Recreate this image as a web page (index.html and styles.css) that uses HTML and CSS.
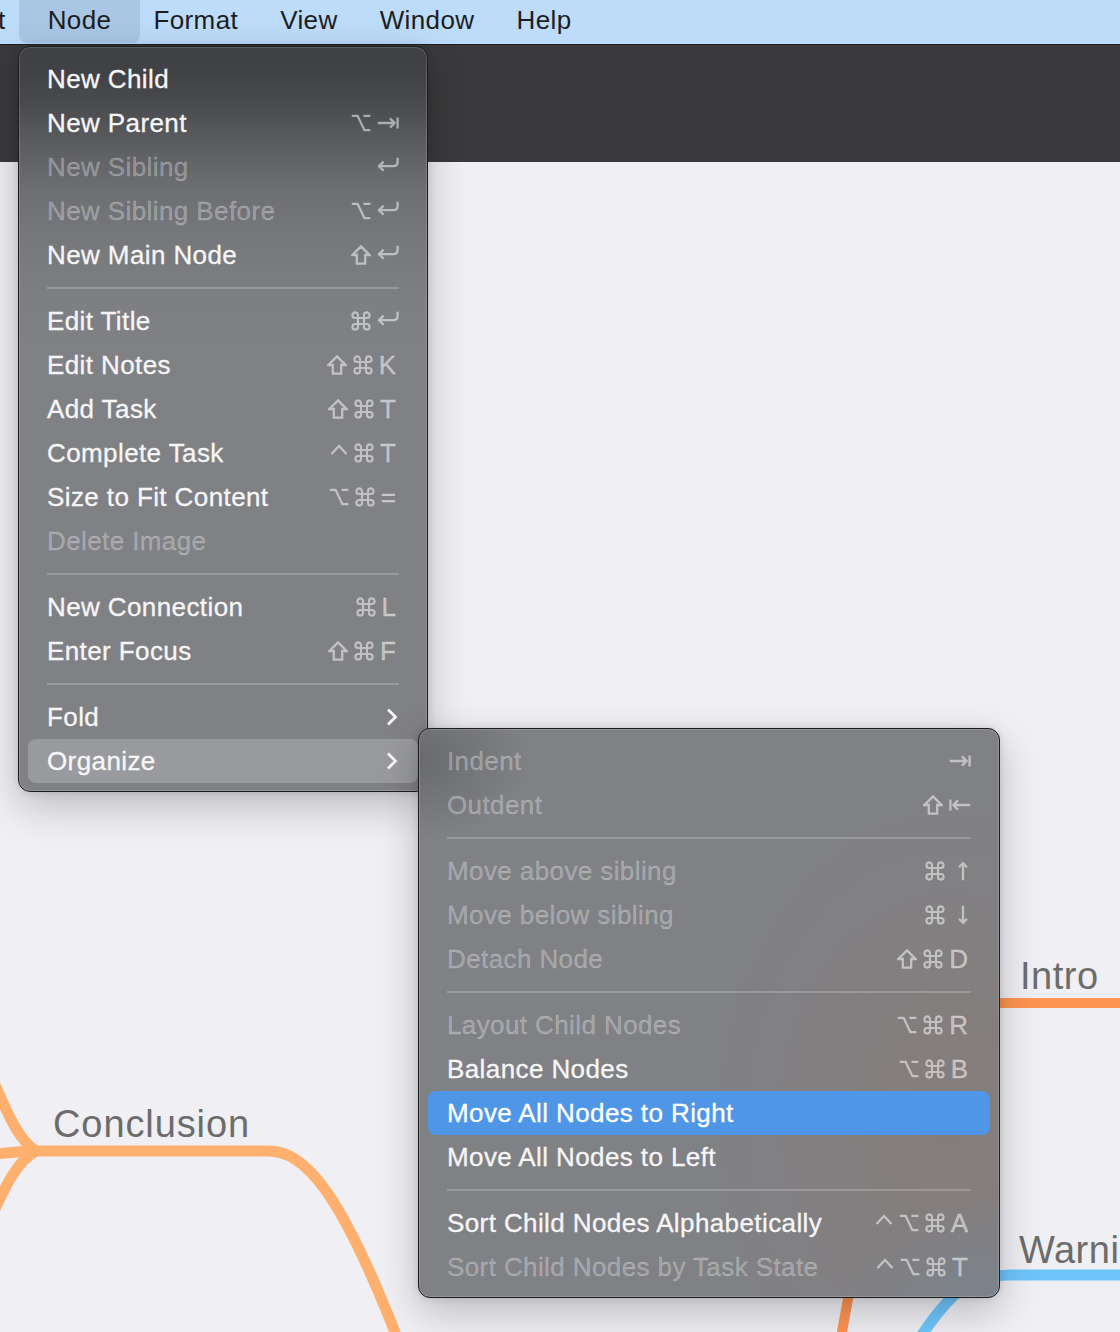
FILE: index.html
```html
<!DOCTYPE html>
<html lang="en">
<head>
<meta charset="utf-8">
<title>Node menu</title>
<link rel="stylesheet" href="styles.css">
</head>
<body>
<svg class="defs" width="0" height="0" aria-hidden="true">
  <symbol id="k-cmd" viewBox="0 0 20 20"><path d="M7 7V4.2A2.8 2.8 0 1 0 4.2 7H15.8A2.8 2.8 0 1 0 13 4.2V15.8A2.8 2.8 0 1 0 15.8 13H4.2A2.8 2.8 0 1 0 7 15.8Z"/></symbol>
  <symbol id="k-shift" viewBox="0 0 20 20"><path d="M10 1.4L18.6 10H14.2V18.6H5.8V10H1.4Z"/></symbol>
  <symbol id="k-opt" viewBox="0 0 20 20"><path d="M0.8 2.8H6.6L13.4 17.2H19.4M12.4 2.8H19.4"/></symbol>
  <symbol id="k-ret" viewBox="0 0 22 20"><path d="M20.6 0.8V5Q20.6 9.2 16.4 9.2H2M6.6 4.6L2 9.2L6.6 13.8"/></symbol>
  <symbol id="k-tab" viewBox="0 0 22 20"><path d="M0.8 10H17.6M13 5.4L17.6 10L13 14.6M20.6 4.4V15.6"/></symbol>
  <symbol id="k-btab" viewBox="0 0 22 20"><path d="M21.2 10H4.4M9 5.4L4.4 10L9 14.6M1.4 4.4V15.6"/></symbol>
  <symbol id="k-up" viewBox="0 0 20 20"><path d="M12 19.2V2.2M8 6.2L12 2.2L16 6.2"/></symbol>
  <symbol id="k-down" viewBox="0 0 20 20"><path d="M12 0.8V17.8M8 13.8L12 17.8L16 13.8"/></symbol>
  <symbol id="k-ctrl" viewBox="0 0 18 20"><path d="M1.5 11L9 3L16.5 11"/></symbol>
  <symbol id="k-chev" viewBox="0 0 14 20"><path d="M3 2.5L10.5 10L3 17.5"/></symbol>
</svg>

<div class="app">
  <nav class="menubar">
    <span class="mb-item cut">t</span>
    <span class="mb-item open">Node</span>
    <span class="mb-item">Format</span>
    <span class="mb-item">View</span>
    <span class="mb-item">Window</span>
    <span class="mb-item">Help</span>
  </nav>

  <div class="toolbar"></div>

  <main class="canvas">
    <svg class="map" width="1120" height="1170" viewBox="0 162 1120 1170">
      <g fill="none" stroke-linecap="round">
        <path d="M830 1400C868 1180 900 1003 1000 1003H1130" stroke="#fe9452" stroke-width="10"/>
        <path d="M915 1345C945 1300 965 1275 1010 1275H1130" stroke="#6ec5fb" stroke-width="11"/>
        <g stroke="#ffb06e" stroke-width="11">
          <path d="M33 1151H268C305 1151 340 1190 400 1345"/>
          <path d="M-8 1078C6 1110 18 1140 36 1151"/>
          <path d="M-8 1154C10 1153 22 1151 36 1151"/>
          <path d="M-8 1215C6 1185 18 1160 36 1151"/>
        </g>
      </g>
      <g class="node-text">
        <text x="1020" y="989">Intro</text>
        <text class="wide" x="53" y="1137">Conclusion</text>
        <text x="1019" y="1263">Warning</text>
      </g>
    </svg>
  </main>

  <div class="menu main-menu">
    <div class="item"><span class="label">New Child</span></div>
    <div class="item"><span class="label">New Parent</span><span class="keys"><svg class="ic"><use href="#k-opt"/></svg><svg class="ic w22"><use href="#k-tab"/></svg></span></div>
    <div class="item off"><span class="label">New Sibling</span><span class="keys"><svg class="ic w22"><use href="#k-ret"/></svg></span></div>
    <div class="item off"><span class="label">New Sibling Before</span><span class="keys"><svg class="ic"><use href="#k-opt"/></svg><svg class="ic w22"><use href="#k-ret"/></svg></span></div>
    <div class="item"><span class="label">New Main Node</span><span class="keys"><svg class="ic"><use href="#k-shift"/></svg><svg class="ic w22"><use href="#k-ret"/></svg></span></div>
    <div class="sep"></div>
    <div class="item"><span class="label">Edit Title</span><span class="keys"><svg class="ic cmd"><use href="#k-cmd"/></svg><svg class="ic w22"><use href="#k-ret"/></svg></span></div>
    <div class="item"><span class="label">Edit Notes</span><span class="keys"><svg class="ic"><use href="#k-shift"/></svg><svg class="ic cmd"><use href="#k-cmd"/></svg><span class="kl">K</span></span></div>
    <div class="item"><span class="label">Add Task</span><span class="keys"><svg class="ic"><use href="#k-shift"/></svg><svg class="ic cmd"><use href="#k-cmd"/></svg><span class="kl">T</span></span></div>
    <div class="item"><span class="label">Complete Task</span><span class="keys"><svg class="ic w18"><use href="#k-ctrl"/></svg><svg class="ic cmd"><use href="#k-cmd"/></svg><span class="kl">T</span></span></div>
    <div class="item"><span class="label">Size to Fit Content</span><span class="keys"><svg class="ic"><use href="#k-opt"/></svg><svg class="ic cmd"><use href="#k-cmd"/></svg><span class="kl">=</span></span></div>
    <div class="item off"><span class="label">Delete Image</span></div>
    <div class="sep"></div>
    <div class="item"><span class="label">New Connection</span><span class="keys"><svg class="ic cmd"><use href="#k-cmd"/></svg><span class="kl">L</span></span></div>
    <div class="item"><span class="label">Enter Focus</span><span class="keys"><svg class="ic"><use href="#k-shift"/></svg><svg class="ic cmd"><use href="#k-cmd"/></svg><span class="kl">F</span></span></div>
    <div class="sep"></div>
    <div class="item"><span class="label">Fold</span><svg class="ic w14 chev"><use href="#k-chev"/></svg></div>
    <div class="item hover"><span class="label">Organize</span><svg class="ic w14 chev"><use href="#k-chev"/></svg></div>
  </div>

  <div class="menu sub-menu">
    <div class="item off"><span class="label">Indent</span><span class="keys"><svg class="ic w22"><use href="#k-tab"/></svg></span></div>
    <div class="item off"><span class="label">Outdent</span><span class="keys"><svg class="ic"><use href="#k-shift"/></svg><svg class="ic w22"><use href="#k-btab"/></svg></span></div>
    <div class="sep"></div>
    <div class="item off"><span class="label">Move above sibling</span><span class="keys"><svg class="ic cmd"><use href="#k-cmd"/></svg><svg class="ic"><use href="#k-up"/></svg></span></div>
    <div class="item off"><span class="label">Move below sibling</span><span class="keys"><svg class="ic cmd"><use href="#k-cmd"/></svg><svg class="ic"><use href="#k-down"/></svg></span></div>
    <div class="item off"><span class="label">Detach Node</span><span class="keys"><svg class="ic"><use href="#k-shift"/></svg><svg class="ic cmd"><use href="#k-cmd"/></svg><span class="kl">D</span></span></div>
    <div class="sep"></div>
    <div class="item off"><span class="label">Layout Child Nodes</span><span class="keys"><svg class="ic"><use href="#k-opt"/></svg><svg class="ic cmd"><use href="#k-cmd"/></svg><span class="kl">R</span></span></div>
    <div class="item"><span class="label">Balance Nodes</span><span class="keys"><svg class="ic"><use href="#k-opt"/></svg><svg class="ic cmd"><use href="#k-cmd"/></svg><span class="kl">B</span></span></div>
    <div class="item sel"><span class="label">Move All Nodes to Right</span></div>
    <div class="item"><span class="label">Move All Nodes to Left</span></div>
    <div class="sep"></div>
    <div class="item"><span class="label">Sort Child Nodes Alphabetically</span><span class="keys"><svg class="ic w18"><use href="#k-ctrl"/></svg><svg class="ic"><use href="#k-opt"/></svg><svg class="ic cmd"><use href="#k-cmd"/></svg><span class="kl">A</span></span></div>
    <div class="item off"><span class="label">Sort Child Nodes by Task State</span><span class="keys"><svg class="ic w18"><use href="#k-ctrl"/></svg><svg class="ic"><use href="#k-opt"/></svg><svg class="ic cmd"><use href="#k-cmd"/></svg><span class="kl">T</span></span></div>
  </div>
</div>
</body>
</html>
```

FILE: styles.css
```css
* { box-sizing: border-box; }
html, body { margin: 0; padding: 0; }
body {
  width: 1120px;
  height: 1332px;
  overflow: hidden;
  background: #efeff4;
  font-family: "Liberation Sans", Arial, Helvetica, sans-serif;
}
.defs { position: absolute; width: 0; height: 0; overflow: hidden; }

.app {
  position: relative;
  width: 1120px;
  height: 1332px;
  display: flex;
  flex-direction: column;
  overflow: hidden;
}

/* ---------- menu bar ---------- */
.menubar {
  flex: none;
  height: 45px;
  display: flex;
  align-items: flex-start;
  background: #bddcfa;
  border-bottom: 1px solid #1e1f21;
  font-size: 26px;
  letter-spacing: 0.4px;
  line-height: 40px;
  color: #1d1d1f;
  white-space: nowrap;
  overflow: hidden;
}
.mb-item { padding: 0 21px; height: 44px; }
.mb-item.cut { margin-left: -23px; }
.mb-item.open {
  padding: 0 29px;
  margin: 0 -8px;
  height: 43px;
  background: #a9c7e5;
  border-radius: 0 0 8px 8px;
}

/* ---------- toolbar & canvas ---------- */
.toolbar { flex: none; height: 117px; background: #3a3a3c; }
.canvas { flex: 1; position: relative; background: #efeff4; }
.map { display: block; }
.node-text text {
  font-family: "Liberation Sans", Arial, sans-serif;
  font-size: 38px;
  letter-spacing: 0.5px;
  fill: #6c6c6c;
}
.node-text text.wide { letter-spacing: 0.9px; }

/* ---------- menus ---------- */
.menu {
  position: absolute;
  padding: 10px 9px 8px;
  border: 1px solid #1c1c1e;
  border-radius: 12px;
  background: #808185;
  box-shadow: inset 0 0 0 1px rgba(255, 255, 255, 0.16),
              0 14px 40px rgba(0, 0, 0, 0.22),
              0 0 8px rgba(0, 0, 0, 0.12);
  font-size: 26px;
  letter-spacing: 0.4px;
  color: #f6f6f7;
  -webkit-text-stroke: 0.3px currentColor;
}
.main-menu {
  left: 18px;
  top: 46px;
  width: 410px;
  background: linear-gradient(180deg,
    #3e4044 0px, #404246 27px, #4a4c50 61px, #5a5c60 94px,
    #6d6f73 144px, #76787c 194px, #7c7e82 244px, #808185 300px, #808185 100%);
}
.sub-menu {
  left: 418px;
  top: 728px;
  width: 582px;
  background:
    radial-gradient(110px 80px at 0px 30px, rgba(60, 62, 66, 0.35), rgba(60, 62, 66, 0)),
    radial-gradient(240px 320px at 530px 390px, rgba(150, 110, 85, 0.22), rgba(150, 110, 85, 0)),
    radial-gradient(150px 110px at 575px 580px, rgba(90, 150, 205, 0.22), rgba(90, 150, 205, 0)),
    #808185;
}

.item {
  height: 44px;
  line-height: 44px;
  padding: 0 19px;
  border-radius: 8px;
  display: flex;
  align-items: center;
  justify-content: space-between;
  white-space: nowrap;
}
.item.off .label { color: rgba(255, 255, 255, 0.3); }
.item.hover { background: rgba(255, 255, 255, 0.2); }
.item.sel { background: #4f97e6; color: #ffffff; }

.keys {
  display: flex;
  align-items: center;
  gap: 6px;
  color: rgba(255, 255, 255, 0.52);
}
.kl { line-height: 26px; letter-spacing: 0; margin-right: 3px; }

.ic {
  display: block;
  width: 20px;
  height: 20px;
  fill: none;
  stroke: currentColor;
  stroke-width: 2.3;
  overflow: visible;
}
.ic.cmd { stroke-width: 2.1; }
.w22 { width: 22px; }
.w18 { width: 18px; }
.w14 { width: 14px; }
.chev { color: #f6f6f7; stroke-width: 2.8; }

.sep {
  height: 2px;
  margin: 10px 19px;
  background: rgba(255, 255, 255, 0.2);
}
```
